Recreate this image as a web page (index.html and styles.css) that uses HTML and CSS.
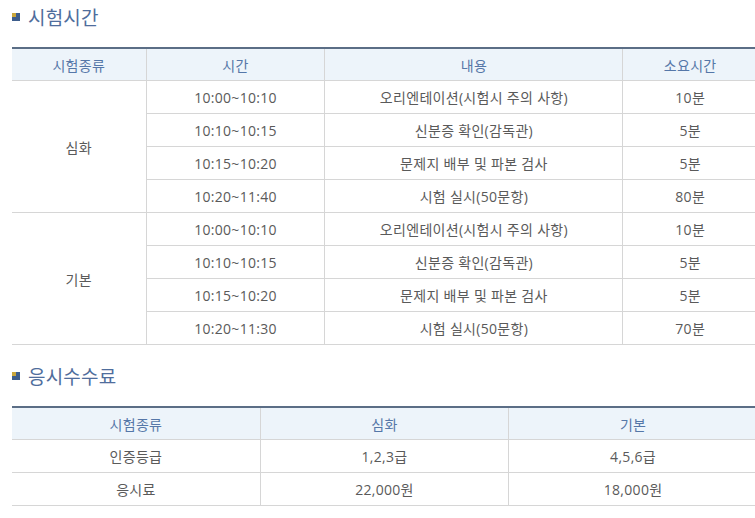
FILE: index.html
```html
<!DOCTYPE html>
<html lang="ko">
<head>
<meta charset="utf-8">
<link rel="stylesheet" href="styles.css">
</head>
<body>
<div class="page">
  <h2 class="title"><span class="bullet"></span>시험시간</h2>
  <table class="tbl">
    <colgroup>
      <col class="c18"><col class="c24"><col class="c40"><col class="c18">
    </colgroup>
    <thead>
      <tr><th>시험종류</th><th>시간</th><th>내용</th><th>소요시간</th></tr>
    </thead>
    <tbody>
      <tr><td rowspan="4" class="grp">심화</td><td>10:00~10:10</td><td>오리엔테이션(시험시 주의 사항)</td><td>10분</td></tr>
      <tr><td>10:10~10:15</td><td>신분증 확인(감독관)</td><td>5분</td></tr>
      <tr><td>10:15~10:20</td><td>문제지 배부 및 파본 검사</td><td>5분</td></tr>
      <tr><td>10:20~11:40</td><td>시험 실시(50문항)</td><td>80분</td></tr>
      <tr><td rowspan="4" class="grp">기본</td><td>10:00~10:10</td><td>오리엔테이션(시험시 주의 사항)</td><td>10분</td></tr>
      <tr><td>10:10~10:15</td><td>신분증 확인(감독관)</td><td>5분</td></tr>
      <tr><td>10:15~10:20</td><td>문제지 배부 및 파본 검사</td><td>5분</td></tr>
      <tr><td>10:20~11:30</td><td>시험 실시(50문항)</td><td>70분</td></tr>
    </tbody>
  </table>

  <h2 class="title second"><span class="bullet"></span>응시수수료</h2>
  <table class="tbl">
    <colgroup>
      <col class="c33"><col class="c33"><col class="c33">
    </colgroup>
    <thead>
      <tr><th>시험종류</th><th>심화</th><th>기본</th></tr>
    </thead>
    <tbody>
      <tr><td>인증등급</td><td>1,2,3급</td><td>4,5,6급</td></tr>
      <tr><td>응시료</td><td>22,000원</td><td>18,000원</td></tr>
    </tbody>
  </table>
</div>
</body>
</html>
```

FILE: styles.css
```css
html, body {
  margin: 0;
  padding: 0;
  background: #ffffff;
}

body {
  font-family: "Open Sans", "Noto Sans CJK KR", sans-serif;
  color: #5a5a5a;
  overflow: hidden;
}

.page {
  padding: 0 0 0 12px;
  width: 745px;
}

.title {
  display: flex;
  align-items: center;
  gap: 8px;
  height: 33px;
  margin: 0 0 14px 0;
  font-family: "Noto Sans CJK KR", sans-serif;
  font-size: 19px;
  font-weight: normal;
  color: #4f6d9c;
  letter-spacing: 0.2px;
}

.title.second {
  margin-top: 14px;
}

.bullet {
  width: 8px;
  height: 8px;
  background: linear-gradient(#c9a63b, #c9a63b) top left / 4px 4px no-repeat, #3d5d8c;
  flex: none;
}

.tbl {
  width: 745px;
  border-collapse: collapse;
  table-layout: fixed;
  font-size: 14px;
  letter-spacing: 0.3px;
  text-align: center;
}

.c18 { width: 18%; }
.c24 { width: 24%; }
.c40 { width: 40%; }
.c33 { width: 33.333%; }

.tbl th {
  height: 31px;
  padding: 0;
  background: #edf4fa;
  color: #5577a8;
  font-weight: normal;
  border-top: 2px solid #5b6e86;
  border-bottom: 1px solid #d6d6d6;
  border-left: 1px solid #d6d6d6;
}

.tbl td {
  height: 32px;
  padding: 0;
  border-bottom: 1px solid #d6d6d6;
  border-left: 1px solid #d6d6d6;
}

.tbl th:first-child,
.tbl td:first-child {
  border-left: none;
}

.tbl td.grp {
  border-right: 1px solid #d6d6d6;
}
```
